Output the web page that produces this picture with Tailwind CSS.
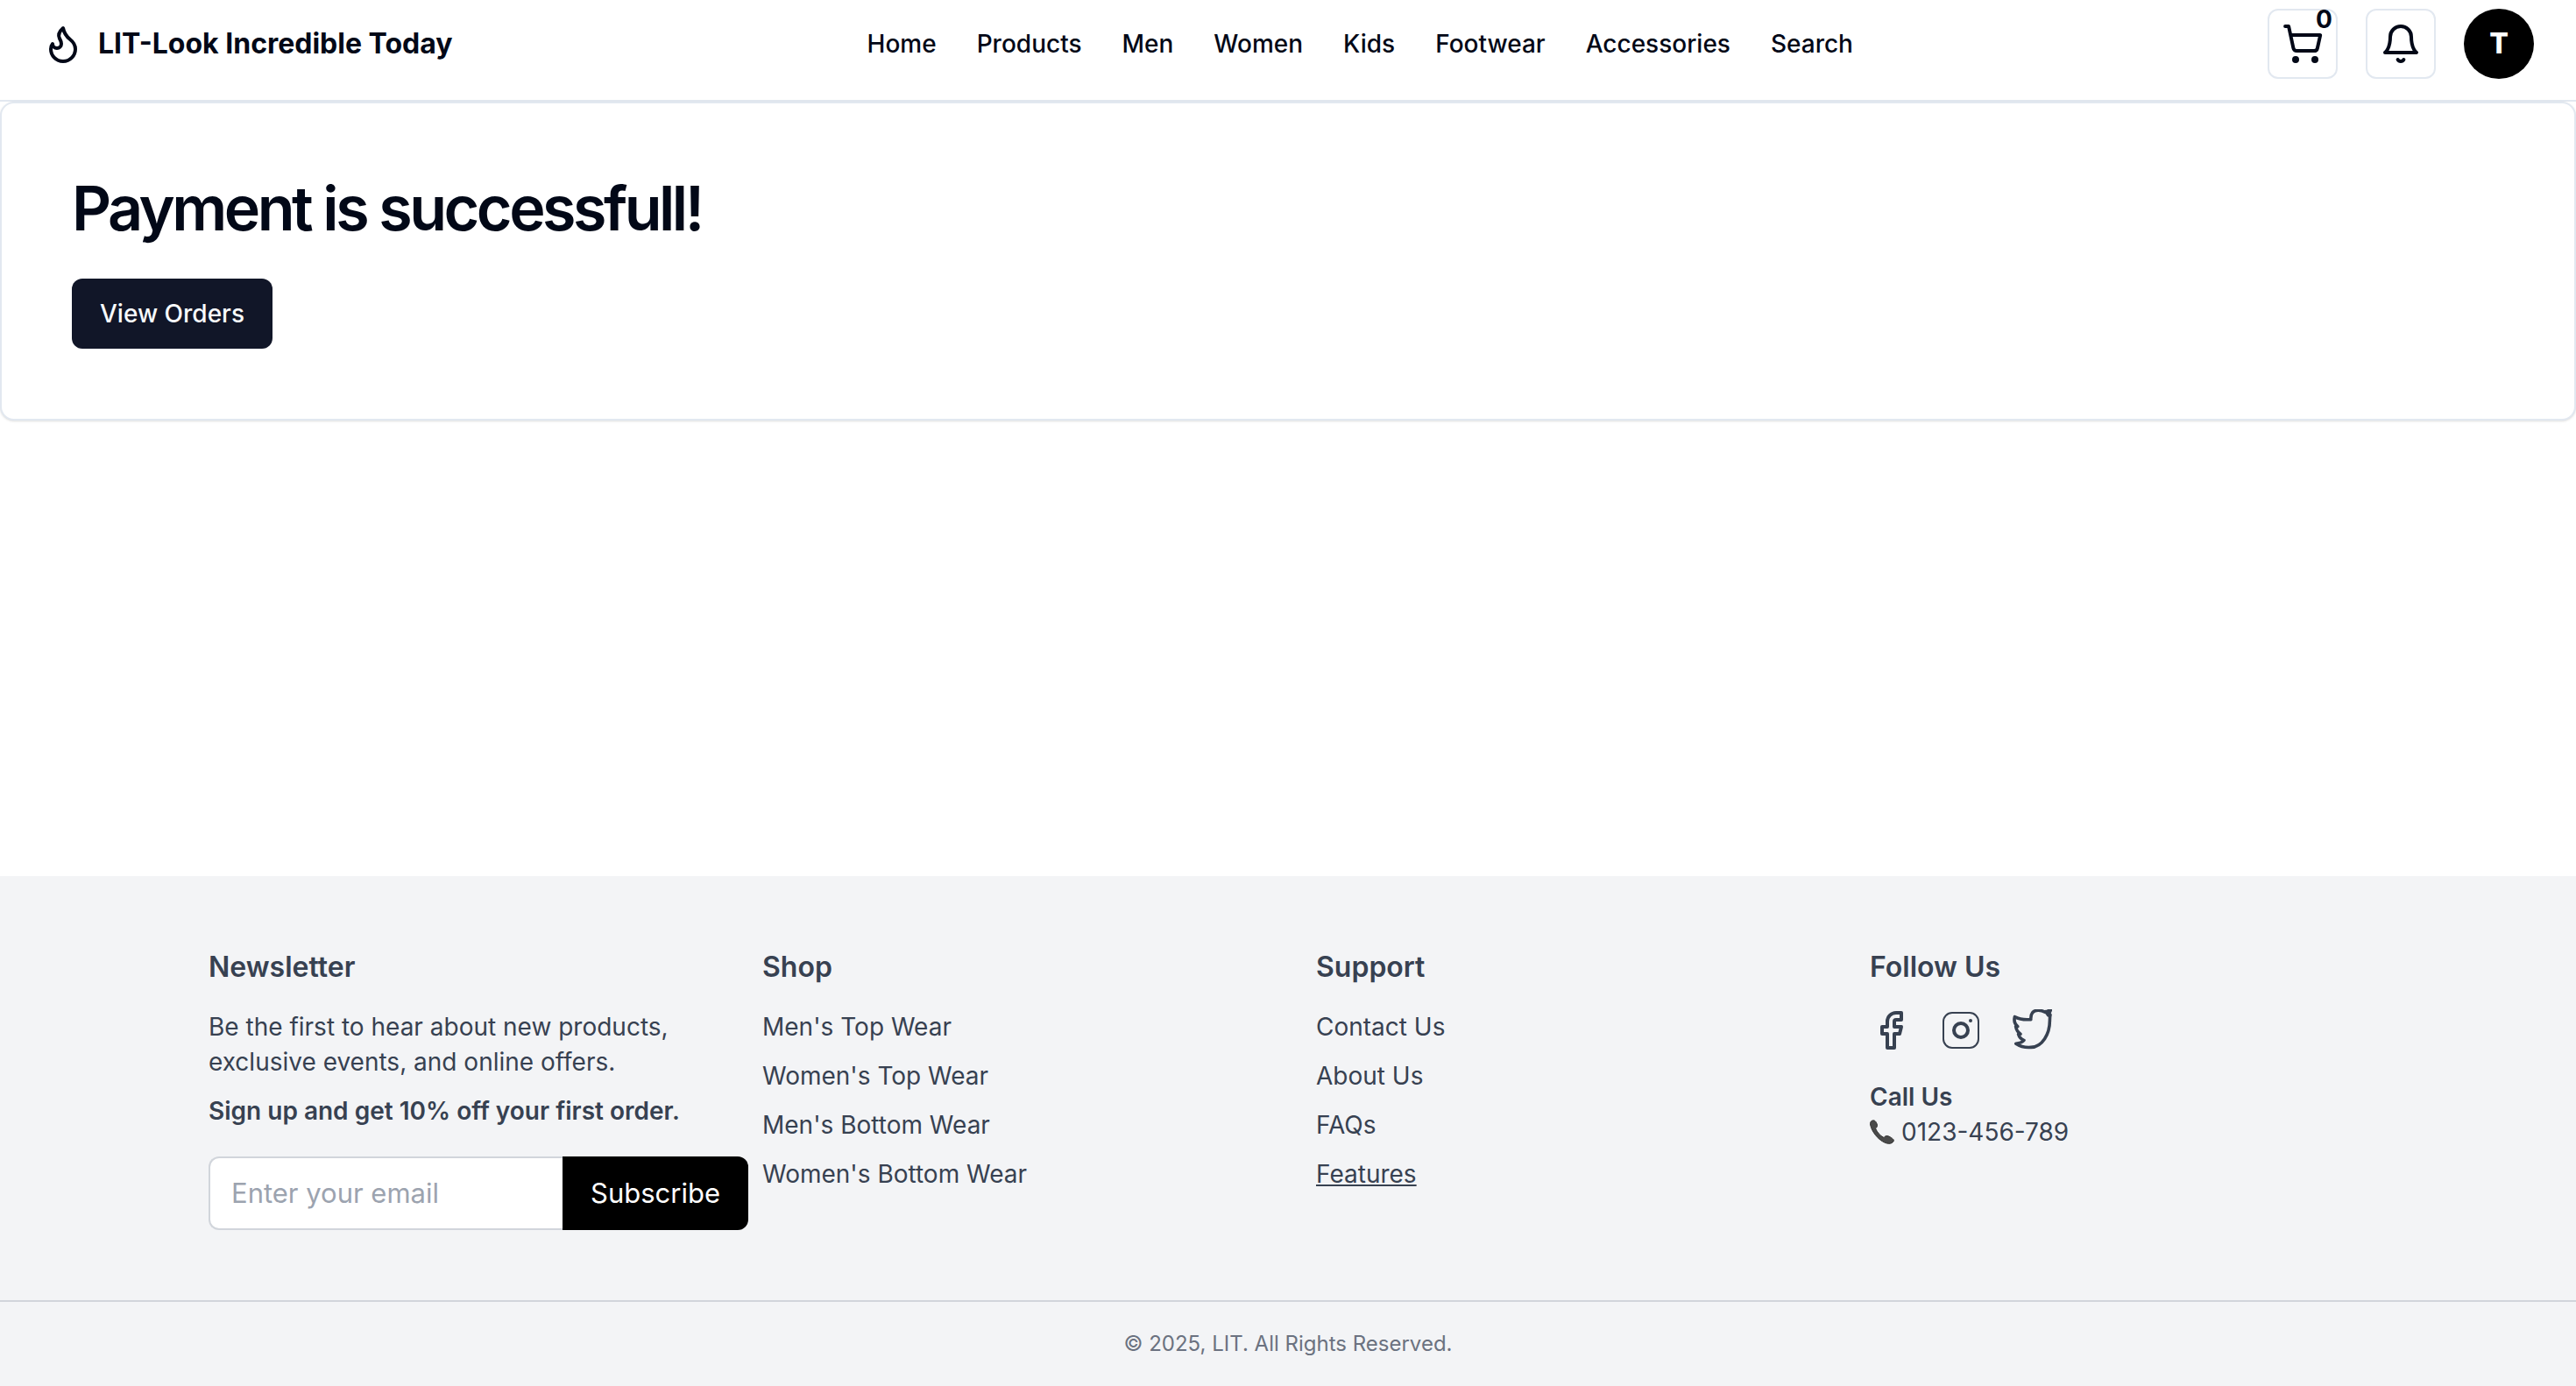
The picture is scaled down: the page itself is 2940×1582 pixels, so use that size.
<!DOCTYPE html>
<html lang="en">
<head>
<meta charset="utf-8">
<meta name="viewport" content="width=device-width, initial-scale=1">
<title>LIT-Look Incredible Today</title>
<script src="https://cdn.jsdelivr.net/npm/@tailwindcss/browser@4"></script>
</head>
<body class="min-h-screen flex flex-col bg-white font-['Inter',sans-serif] text-[28px] leading-10 text-[#020817]">
<header class="flex items-center justify-between border-b-2 border-[#e2e8f0] px-12 pt-2.5 pb-6">
  <a href="#" class="flex items-center gap-4 text-[32px] font-bold">
    <svg class="size-12" viewBox="0 0 24 24" fill="none" stroke="currentColor" stroke-width="2" stroke-linecap="round" stroke-linejoin="round" aria-hidden="true"><path d="M8.500 14.500A2.500 2.500 0 0 0 11 12c0-1.380-.5-2-1-3-1.072-2.143-.224-4.054 2-6 .5 2.500 2 4.900 4 6.500 2 1.600 3 3.500 3 5.500a7 7 0 1 1-14 0c0-1.153.433-2.294 1-3a2.500 2.500 0 0 0 2.500 2.500z"/></svg>
    <span>LIT-Look Incredible Today</span>
  </a>
  <nav class="flex items-center gap-[46px] font-medium">
    <a href="#">Home</a><a href="#">Products</a><a href="#">Men</a><a href="#">Women</a><a href="#">Kids</a><a href="#">Footwear</a><a href="#">Accessories</a><a href="#">Search</a>
  </nav>
  <div class="flex items-center gap-8">
    <button type="button" aria-label="Cart" class="relative flex size-20 items-center justify-center rounded-xl border-2 border-[#e2e8f0]">
      <svg class="size-12" viewBox="0 0 24 24" fill="none" stroke="currentColor" stroke-width="2" stroke-linecap="round" stroke-linejoin="round" aria-hidden="true"><circle cx="8" cy="21" r="1"/><circle cx="19" cy="21" r="1"/><path d="M2.050 2.050h2l2.660 12.420a2 2 0 0 0 2 1.580h9.780a2 2 0 0 0 1.950-1.570l1.650-7.430H5.120"/></svg>
      <span class="absolute -top-2.5 right-1 font-bold">0</span>
    </button>
    <button type="button" aria-label="Notifications" class="flex size-20 items-center justify-center rounded-xl border-2 border-[#e2e8f0]">
      <svg class="size-12" viewBox="0 0 24 24" fill="none" stroke="currentColor" stroke-width="2" stroke-linecap="round" stroke-linejoin="round" aria-hidden="true"><path d="M6 8a6 6 0 0 1 12 0c0 7 3 9 3 9H3s3-2 3-9"/><path d="M10.300 21a1.940 1.940 0 0 0 3.400 0"/></svg>
    </button>
    <button type="button" aria-label="Account" class="size-20 rounded-full bg-black text-[32px] font-extrabold text-white">T</button>
  </div>
</header>
<main class="flex-1">
  <section class="rounded-2xl border-2 border-[#e2e8f0] bg-white p-20 shadow-sm">
    <h1 class="mb-10 text-[70px] leading-20 font-semibold tracking-tighter">Payment is successfull!</h1>
    <button type="button" class="h-20 rounded-xl bg-[#111628] px-8 font-medium text-[#f8fafc]">View Orders</button>
  </section>
</main>
<footer class="bg-gray-100 text-[#374151]">
  <div class="mx-auto grid max-w-[2560px] grid-cols-4 gap-16 px-12 py-20">
    <section>
      <h2 class="mb-6 text-[32px] leading-12 font-semibold">Newsletter</h2>
      <p class="mb-4">Be the first to hear about new products, exclusive events, and online offers.</p>
      <p class="mb-8 font-semibold whitespace-nowrap">Sign up and get 10% off your first order.</p>
      <form class="-mr-12 flex h-21 text-[31px]">
        <input type="email" aria-label="Email" placeholder="Enter your email" class="min-w-0 flex-1 rounded-l-xl border-2 border-r-0 border-[#d1d5db] bg-white px-6 placeholder:text-[#9ca3af]">
        <button type="button" class="rounded-r-xl bg-black px-8 text-white">Subscribe</button>
      </form>
    </section>
    <section>
      <h2 class="mb-6 text-[32px] leading-12 font-semibold">Shop</h2>
      <ul class="flex flex-col gap-4"><li><a href="#">Men's Top Wear</a></li><li><a href="#">Women's Top Wear</a></li><li><a href="#">Men's Bottom Wear</a></li><li><a href="#">Women's Bottom Wear</a></li></ul>
    </section>
    <section>
      <h2 class="mb-6 text-[32px] leading-12 font-semibold">Support</h2>
      <ul class="flex flex-col gap-4"><li><a href="#">Contact Us</a></li><li><a href="#">About Us</a></li><li><a href="#">FAQs</a></li><li><a href="#" class="underline">Features</a></li></ul>
    </section>
    <section>
      <h2 class="mb-6 text-[32px] leading-12 font-semibold">Follow Us</h2>
      <div class="mb-8 flex gap-8">
        <a href="#" aria-label="Facebook"><svg class="size-12" viewBox="0 0 24 24" fill="none" stroke="currentColor" stroke-width="2" stroke-linecap="round" stroke-linejoin="round"><path d="M18 2h-3a5 5 0 0 0-5 5v3H7v4h3v8h4v-8h3l1-4h-4V7a1 1 0 0 1 1-1h3z"/></svg></a>
        <a href="#" aria-label="Instagram"><svg class="size-12" viewBox="0 0 24 24" fill="none" stroke="currentColor" stroke-width="2"><rect x="2" y="2" width="20" height="20" rx="5" stroke-width="1"/><circle cx="12" cy="12" r="4"/><circle cx="17.500" cy="6.500" r="1" fill="currentColor" stroke="none"/></svg></a>
        <a href="#" aria-label="Twitter"><svg class="size-12" viewBox="0 0 24 24" fill="none" stroke="currentColor" stroke-width="1.800" stroke-linecap="round" stroke-linejoin="round"><path d="M2.700 4.300Q6.500 6.300 11.900 5.800C11.700 2.500 13.200.6 16 .6C17.700.5 19 1.100 20.200 1.700L23.300.2L22.200 2.700L23 3.200C22.800 4 22.700 5 22.700 6.500C22.700 14 18.500 21.500 12 21.700C8.500 22 5.500 21 3.400 19.600C5.500 19.400 7 18.800 8 17.700C6.400 17.200 5.300 16 4.800 14.300L6 14.100C4.300 13 3.600 11.600 3.300 9.900L4.400 9.800C2.600 8.300 2.200 6.300 2.700 4.300zM20.400 1.300l1.500 2.200 1-.4"/></svg></a>
      </div>
      <p class="font-semibold">Call Us</p>
      <p class="flex items-center gap-2">
        <svg class="size-7" viewBox="0 0 28 28" aria-hidden="true"><path fill="#4a4a4a" stroke="#303030" d="M2 1.500C4.500 0 6.500 1 8 4.500c1 2.500.5 4-1.500 5.500 2 4.500 5 8 9.500 10.500 2-2.500 4-2.500 7-.8 4 2.300 5.500 3.800 3.500 5.800-3.500 3.500-9 1.500-14-2C6.500 19 2 12 .7 6 .2 4 .7 2.300 2 1.500z"/></svg>
        <span>0123-456-789</span>
      </p>
    </section>
  </div>
  <div class="border-t-2 border-[#d1d5db] py-8 text-center text-2xl leading-8 text-[#6b7280]">© 2025, LIT. All Rights Reserved.</div>
</footer>
</body>
</html>
